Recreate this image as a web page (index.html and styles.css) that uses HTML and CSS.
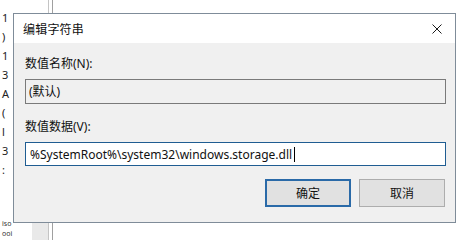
FILE: index.html
```html
<!DOCTYPE html>
<html lang="zh-CN">
<head>
<meta charset="utf-8">
<title>编辑字符串</title>
<link rel="stylesheet" href="styles.css">
</head>
<body>
<div class="desk">
  <div class="under">
    <span>1</span><span>)</span><span>1</span><span>3</span><span>A</span><span>(</span><span>l</span><span>3</span><span>:</span><span class="tail">iso</span><span class="tail">ooi</span>
  </div>
  <div class="under-col"></div>
</div>
<div class="dialog">
  <div class="titlebar">
    <span class="title">编辑字符串</span>
    <svg class="close" width="10" height="10" viewBox="0 0 10 10"><path d="M0.5 0.5 L9.5 9.5 M9.5 0.5 L0.5 9.5" stroke="#1a1a1a" stroke-width="1" fill="none"/></svg>
  </div>
  <div class="body">
    <div class="label l1">数值名称(N):</div>
    <div class="field readonly">(默认)</div>
    <div class="label l2">数值数据(V):</div>
    <div class="field edit"><span>%SystemRoot%\system32\windows.storage.dll</span><span class="caret"></span></div>
    <div class="buttons">
      <div class="btn ok">确定</div>
      <div class="btn">取消</div>
    </div>
  </div>
</div>
</body>
</html>
```
FILE: styles.css
```css
html, body { margin: 0; padding: 0; }
body {
  width: 467px; height: 240px; overflow: hidden; background: #fff;
  font-family: "Noto Sans", "Noto Sans CJK SC", sans-serif;
  position: relative;
}
.desk { display: flex; height: 240px; }
.under {
  width: 28px; display: flex; flex-direction: column;
  font-size: 11px; color: #222; line-height: 12px; padding: 12px 0 0 2px;
  white-space: nowrap;
}
.under span { display: block; height: 19px; }
.under span.tail { height: 10px; line-height: 10px; font-size: 7px; color: #333; }
.under span:nth-child(10) { margin-top: 36px; }
.under-col {
  margin-left: 2px; width: 16px;
  background: linear-gradient(#fff 0 222px, #e9e9e9 222px);
  border-right: 1px solid #c4c4c4;
  box-shadow: 3px 0 0 #fff, 4px 0 0 #a0a0a0;
}
.dialog {
  position: absolute; left: 13px; top: 13px;
  width: 441px; height: 208px;
  border: 1px solid #7f8c99;
  background: #f0f0f0;
  display: flex; flex-direction: column;
}
.titlebar {
  height: 29px; background: #fff; display: flex; align-items: center;
  padding: 0 13px 0 9px; justify-content: space-between;
}
.title { font-size: 12px; color: #111; letter-spacing: 0.2px; }
.close { display: block; }
.body { padding: 13px 10px 0 11px; display: flex; flex-direction: column; }
.label { font-size: 12px; color: #111; height: 16px; line-height: 16px; }
.l1 { margin-bottom: 7px; }
.l2 { margin-top: 15px; margin-bottom: 7px; }
.field {
  height: 23px; box-sizing: content-box; font-size: 12px; line-height: 23px;
  padding: 0 3px; display: flex; align-items: center; color: #111;
}
.readonly { border: 1px solid #7a7a7a; background: #f0f0f0; width: 413px; }
.edit { border: 1px solid #1f5d92; background: #fff; width: 412px; height: 22px; padding-left: 4px; }
.caret { display: inline-block; width: 1px; height: 15px; background: #000; margin-left: 2px; }
.buttons { display: flex; justify-content: flex-end; gap: 8px; margin-top: 13px; }
.btn {
  width: 84px; height: 26px; border: 1px solid #adadad; background: #e1e1e1;
  font-size: 12px; display: flex; align-items: center; justify-content: center; color: #111;
}
.btn.ok { border: 2px solid #2a6aa8; width: 82px; height: 24px; }
```
